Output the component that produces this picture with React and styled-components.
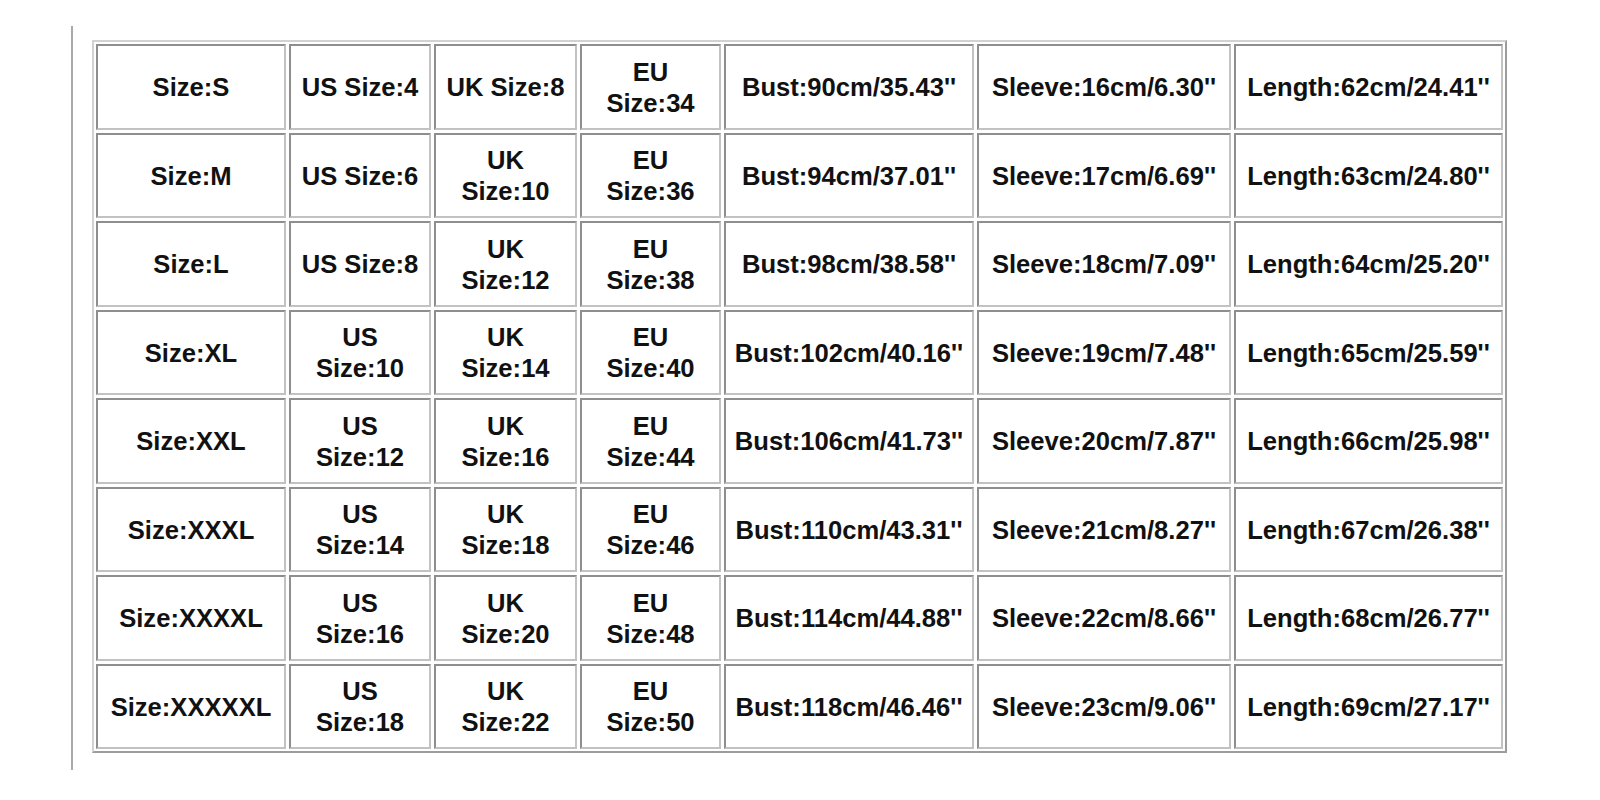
import React from "react";
import styled, { createGlobalStyle } from "styled-components";

const GlobalStyle = createGlobalStyle`
  html, body {
    margin: 0;
    padding: 0;
    background: #ffffff;
  }
  body {
    font-family: "Liberation Sans", Arial, sans-serif;
  }
`;

const Page = styled.div`
  width: 1600px;
  height: 800px;
  display: flex;
  align-items: flex-start;
  background: #fff;
`;

const Rule = styled.div`
  width: 2px;
  height: 744px;
  margin: 26px 0 0 71px;
  background: #a9a9a9;
`;

const SizeTable = styled.div`
  margin: 40px 0 0 19px;
  padding: 2px;
  border: 2px solid;
  border-color: #d2d2d2 #9c9c9c #9c9c9c #d2d2d2;
  display: grid;
  grid-template-columns: 190px 142px 143px 141px 250px 254px 269px;
  grid-template-rows: repeat(8, 85.5px);
  gap: 3px;
`;

const Cell = styled.div`
  border: 2px solid;
  border-color: #8e8e8e #c2c2c2 #c2c2c2 #8e8e8e;
  display: flex;
  flex-direction: column;
  align-items: center;
  justify-content: center;
  text-align: center;
  font-weight: bold;
  font-size: 25.6px;
  line-height: 31px;
  color: #111;
  white-space: nowrap;
  padding-top: 2px;
`;

const rows = [
  ["Size:S", "US Size:4", "UK Size:8", "EU|Size:34", "Bust:90cm/35.43''", "Sleeve:16cm/6.30''", "Length:62cm/24.41''"],
  ["Size:M", "US Size:6", "UK|Size:10", "EU|Size:36", "Bust:94cm/37.01''", "Sleeve:17cm/6.69''", "Length:63cm/24.80''"],
  ["Size:L", "US Size:8", "UK|Size:12", "EU|Size:38", "Bust:98cm/38.58''", "Sleeve:18cm/7.09''", "Length:64cm/25.20''"],
  ["Size:XL", "US|Size:10", "UK|Size:14", "EU|Size:40", "Bust:102cm/40.16''", "Sleeve:19cm/7.48''", "Length:65cm/25.59''"],
  ["Size:XXL", "US|Size:12", "UK|Size:16", "EU|Size:44", "Bust:106cm/41.73''", "Sleeve:20cm/7.87''", "Length:66cm/25.98''"],
  ["Size:XXXL", "US|Size:14", "UK|Size:18", "EU|Size:46", "Bust:110cm/43.31''", "Sleeve:21cm/8.27''", "Length:67cm/26.38''"],
  ["Size:XXXXL", "US|Size:16", "UK|Size:20", "EU|Size:48", "Bust:114cm/44.88''", "Sleeve:22cm/8.66''", "Length:68cm/26.77''"],
  ["Size:XXXXXL", "US|Size:18", "UK|Size:22", "EU|Size:50", "Bust:118cm/46.46''", "Sleeve:23cm/9.06''", "Length:69cm/27.17''"],
];

export default function App() {
  return (
    <Page>
      <GlobalStyle />
      <Rule />
      <SizeTable>
        {rows.map((row, r) =>
          row.map((text, c) => (
            <Cell key={`${r}-${c}`}>
              {text.split("|").map((line, i) => (
                <span key={i}>{line}</span>
              ))}
            </Cell>
          ))
        )}
      </SizeTable>
    </Page>
  );
}
